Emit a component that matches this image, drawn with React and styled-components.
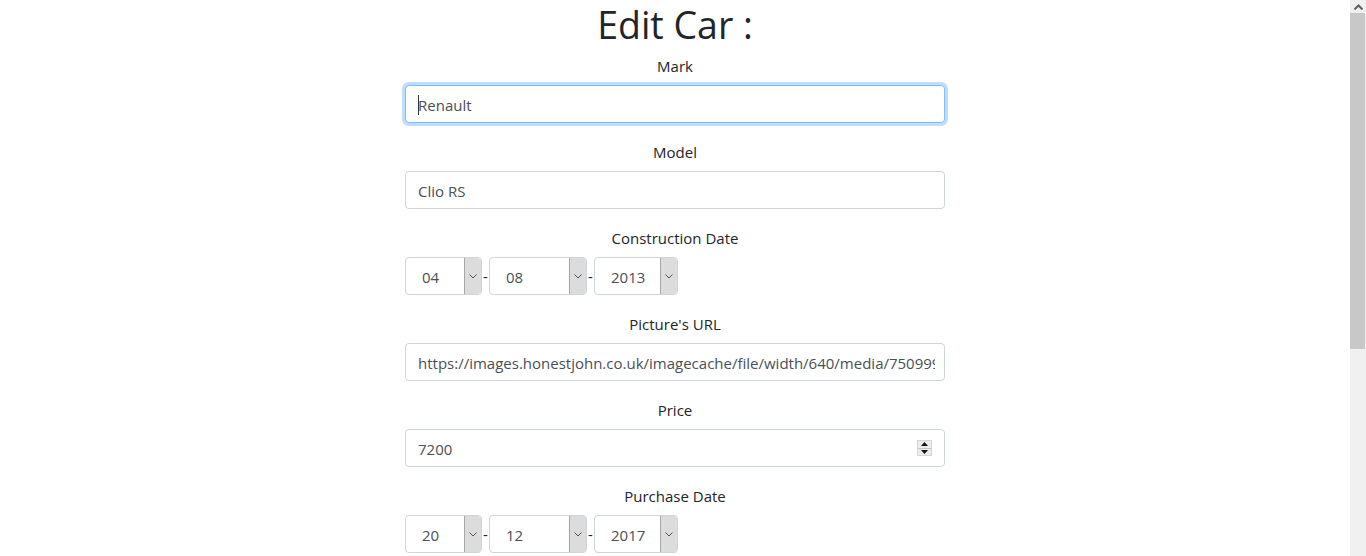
import React from "react";
import styled, { createGlobalStyle } from "styled-components";

const Global = createGlobalStyle`
  html, body { margin: 0; padding: 0; height: 556px; overflow: hidden; background: #fff; }
  body { font-family: "Open Sans", "Noto Sans", sans-serif; color: #212529; font-size: 15px; line-height: 1.5; }
  * { box-sizing: border-box; }
`;

const Page = styled.div`
  display: flex;
  width: 1366px;
  height: 556px;
`;

const Main = styled.main`
  flex: 1;
  display: flex;
  justify-content: center;
  overflow: hidden;
`;

const Form = styled.form`
  width: 540px;
  display: flex;
  flex-direction: column;
`;

const Title = styled.h1`
  margin: 0 0 5px;
  padding-top: 1px;
  height: 48px;
  font-size: 37.5px;
  font-weight: 400;
  line-height: 47px;
  text-align: center;
  color: #212529;
`;

const Group = styled.div`
  display: flex;
  flex-direction: column;
  margin-bottom: 16px;
`;

const Label = styled.label`
  display: block;
  text-align: center;
  height: 24px;
  padding-top: 2px;
  line-height: 22px;
  margin-bottom: 8px;
  color: #212529;
`;

const Field = styled.div`
  position: relative;
  height: 38px;
`;

const Input = styled.input`
  display: block;
  width: 100%;
  height: 38px;
  padding: 7px 9px 5px 12px;
  font: inherit;
  font-size: 15px;
  color: #495057;
  background: #fff;
  border: 1px solid ${(p) => (p.$focused ? "#80bdff" : "#ced4da")};
  border-radius: 4px;
  outline: none;
  box-shadow: ${(p) => (p.$focused ? "0 0 0 3px rgba(0,123,255,.25)" : "none")};
  caret-color: transparent;
`;

const Caret = styled.span`
  position: absolute;
  left: 13px;
  top: 10px;
  width: 1px;
  height: 20px;
  background: #333;
`;

const Spinner = styled.div`
  position: absolute;
  right: 13px;
  top: 11px;
  width: 15px;
  height: 16px;
  display: flex;
  flex-direction: column;
  background: #ececec;
  border: 1px solid #d6d6d6;
`;

const SpinBtn = styled.div`
  flex: 1;
  display: flex;
  align-items: center;
  justify-content: center;
  & + & { border-top: 1px solid #c4c4c4; }
`;

const DateRow = styled.div`
  display: flex;
  align-items: center;
  height: 38px;
`;

const Select = styled.div`
  display: flex;
  width: ${(p) => p.$w}px;
  height: 38px;
  border: 1px solid #ced4da;
  border-radius: 4px;
  overflow: hidden;
  color: #495057;
  background: #fff;
`;

const SelectValue = styled.span`
  flex: 1;
  padding-left: 16px;
  padding-top: 2px;
  line-height: 34px;
`;

const ArrowBox = styled.span`
  width: 17px;
  display: flex;
  align-items: center;
  justify-content: center;
  background: #dcdcdc;
  border-left: 1px solid #a6a6a6;
`;

const Dash = styled.span`
  width: 7px;
  text-align: center;
  color: #212529;
`;

const Scrollbar = styled.div`
  width: 16px;
  height: 556px;
  background: #f0f0f0;
  display: flex;
  flex-direction: column;
`;

const ScrollArrow = styled.div`
  height: 13px;
  display: flex;
  align-items: center;
  justify-content: center;
`;

const Thumb = styled.div`
  height: 336px;
  width: 15px;
  background: #c8c8c8;
`;

const Chevron = () => (
  <svg width="8" height="5" viewBox="0 0 8 5">
    <path d="M0.5 0.5 L4 4 L7.5 0.5" fill="none" stroke="#555" strokeWidth="1" />
  </svg>
);

const Tri = ({ up }) => (
  <svg width="7" height="4" viewBox="0 0 7 4">
    <path d={up ? "M0 4 L3.5 0 L7 4 Z" : "M0 0 L3.5 4 L7 0 Z"} fill="#111" />
  </svg>
);

const DateSelect = ({ values }) => (
  <DateRow>
    <Select $w={77}><SelectValue>{values[0]}</SelectValue><ArrowBox><Chevron /></ArrowBox></Select>
    <Dash>-</Dash>
    <Select $w={98}><SelectValue>{values[1]}</SelectValue><ArrowBox><Chevron /></ArrowBox></Select>
    <Dash>-</Dash>
    <Select $w={84}><SelectValue>{values[2]}</SelectValue><ArrowBox><Chevron /></ArrowBox></Select>
  </DateRow>
);

export default function App() {
  return (
    <>
      <Global />
      <Page>
        <Main>
          <Form onSubmit={(e) => e.preventDefault()}>
            <Title>Edit Car :</Title>
            <Group>
              <Label>Mark</Label>
              <Field>
                <Input $focused defaultValue="Renault" />
                <Caret />
              </Field>
            </Group>
            <Group>
              <Label>Model</Label>
              <Field><Input defaultValue="Clio RS" /></Field>
            </Group>
            <Group>
              <Label>Construction Date</Label>
              <DateSelect values={["04", "08", "2013"]} />
            </Group>
            <Group>
              <Label>Picture's URL</Label>
              <Field>
                <Input defaultValue="https://images.honestjohn.co.uk/imagecache/file/width/640/media/7509999/Renault~Clio~RS.jpg" />
              </Field>
            </Group>
            <Group>
              <Label>Price</Label>
              <Field>
                <Input defaultValue="7200" />
                <Spinner>
                  <SpinBtn><Tri up /></SpinBtn>
                  <SpinBtn><Tri /></SpinBtn>
                </Spinner>
              </Field>
            </Group>
            <Group>
              <Label>Purchase Date</Label>
              <DateSelect values={["20", "12", "2017"]} />
            </Group>
          </Form>
        </Main>
        <Scrollbar>
          <ScrollArrow>
            <svg width="9" height="6" viewBox="0 0 9 6">
              <path d="M0.5 5.5 L4.5 1.5 L8.5 5.5" fill="none" stroke="#606060" strokeWidth="2" />
            </svg>
          </ScrollArrow>
          <Thumb />
        </Scrollbar>
      </Page>
    </>
  );
}
